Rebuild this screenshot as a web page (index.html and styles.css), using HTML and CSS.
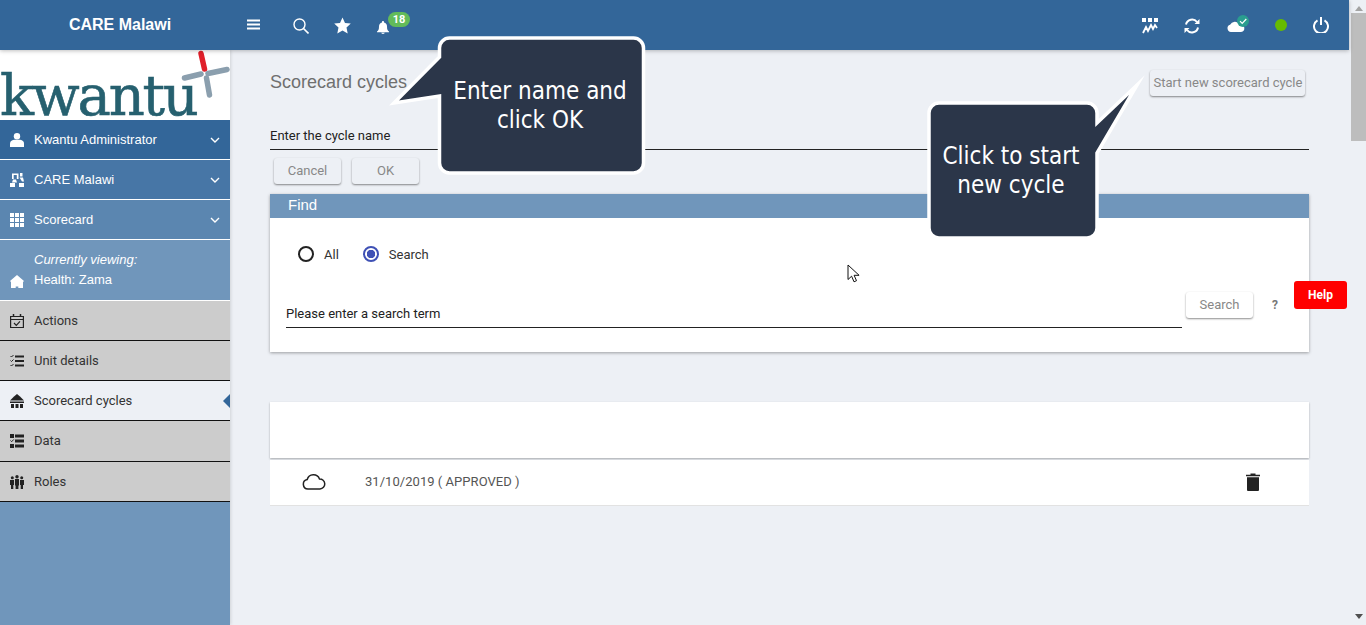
FILE: index.html
```html
<!DOCTYPE html>
<html lang="en">
<head>
<meta charset="utf-8">
<title>Scorecard cycles</title>
<link rel="stylesheet" href="styles.css">
</head>
<body>
<div class="app">
  <div class="page">
    <header class="topbar">
      <div class="brand">CARE Malawi</div>
      <nav class="tools">
        <svg class="ic-menu" viewBox="0 0 13 11"><path d="M0 0.5h13v2H0zM0 4.500h13v2H0zM0 8.500h13v2H0z" fill="#fff"/></svg>
        <svg class="ic-search" viewBox="0 0 16 16"><circle cx="6.500" cy="6.500" r="5.500" fill="none" stroke="#fff" stroke-width="1.400"/><path d="M10.500 10.500L15.500 15.500" stroke="#fff" stroke-width="1.600"/></svg>
        <svg class="ic-star" viewBox="0 0 17 17"><path d="M8.500 0.500l2.500 5.400 5.800.7-4.300 4 1.200 5.900-5.200-3-5.200 3 1.200-5.900-4.300-4 5.800-.7z" fill="#fff"/></svg>
        <span class="bell">
          <svg class="ic-bell" viewBox="0 0 12 13"><path d="M6 0c.6 0 1 .4 1 1v.4c2 .5 3 2 3 4 0 3 .6 3.800 2 5.100v.8H0v-.8c1.400-1.300 2-2.100 2-5.100 0-2 1-3.500 3-4V1c0-.6.4-1 1-1zM4.300 11.800h3.400c0 .7-.8 1.200-1.700 1.200s-1.700-.5-1.700-1.200z" fill="#fff"/></svg>
          <span class="badge">18</span>
        </span>
      </nav>
      <div class="status">
        <svg class="ic-stats" viewBox="0 0 16 16"><path d="M0 0h4v4H0zM6 0h4v4H6zM12 0h4v4h-4z" fill="#fff"/><path d="M1 15l3-6 2 4 3-6 2 4 2-4 2 3" fill="none" stroke="#fff" stroke-width="1.800"/></svg>
        <svg class="ic-sync" viewBox="0 0 16 16"><path d="M2 6.500A6.200 6.200 0 0 1 13 4M14 9.500A6.200 6.200 0 0 1 3 12" fill="none" stroke="#fff" stroke-width="2"/><path d="M15.500 1v5h-5zM.5 15v-5h5z" fill="#fff"/></svg>
        <span class="cloud">
          <svg class="ic-cloud" viewBox="0 0 20 12"><path d="M4.500 12a4 4 0 0 1-1-7.800A6 6 0 0 1 14 3.500a4.300 4.300 0 0 1 1.500 8.500z" fill="#fff"/></svg>
          <svg class="ic-tick" viewBox="0 0 12 12"><circle cx="6" cy="6" r="6" fill="#2a9d8f"/><path d="M3 6.200l2.200 2.200L9.300 4" fill="none" stroke="#fff" stroke-width="1.200"/></svg>
        </span>
        <span class="dot"></span>
        <svg class="ic-power" viewBox="0 0 16 16"><path d="M4.500 3.300a7 7 0 1 0 7 0" fill="none" stroke="#fff" stroke-width="2"/><path d="M8 0v8" stroke="#fff" stroke-width="2"/></svg>
      </div>
    </header>
    <div class="below">
      <aside class="sidebar">
        <div class="logo">
          <span class="logo-text">kwantu</span>
          <svg class="logo-cross" viewBox="0 0 50 50"><path d="M21 3.500l3.500 15.500" stroke="#e0202a" stroke-width="5.500" stroke-linecap="round"/><path d="M4.500 28L21 24M28 23.500L47 19.500M26.500 28L29.500 45" stroke="#8b9fae" stroke-width="5.500" stroke-linecap="round"/></svg>
        </div>
        <a class="nav-blue shade-1">
          <svg class="nav-icon" viewBox="0 0 14 14"><circle cx="7" cy="3.200" r="3.200" fill="#fff"/><path d="M0 14v-3.500C0 8 2.500 6.800 4.500 6.800h5c2 0 4.500 1.200 4.500 3.700V14z" fill="#fff"/></svg>
          <span class="nav-label">Kwantu Administrator</span>
          <svg class="chev" viewBox="0 0 10 6"><path d="M1 1l4 4 4-4" fill="none" stroke="#fff" stroke-width="1.400"/></svg>
        </a>
        <a class="nav-blue shade-2">
          <svg class="nav-icon tall-icon" viewBox="0 0 14 15"><path d="M2 7V1.500h6.500V7H6.800V3H3.700v4zM10 1h2.500v3.500H10zM9.500 5.500h3.500l1 4h-2zM3 7.500h3l1 3H2z" fill="#fff"/><path d="M0 11h5v4H0zM9 11h5v4H9z" fill="#fff"/></svg>
          <span class="nav-label">CARE Malawi</span>
          <svg class="chev" viewBox="0 0 10 6"><path d="M1 1l4 4 4-4" fill="none" stroke="#fff" stroke-width="1.400"/></svg>
        </a>
        <a class="nav-blue shade-3">
          <svg class="nav-icon" viewBox="0 0 14 14"><path d="M0 0h4v4H0zM5 0h4v4H5zM10 0h4v4h-4zM0 5h4v4H0zM5 5h4v4H5zM10 5h4v4h-4zM0 10h4v4H0zM5 10h4v4H5zM10 10h4v4h-4z" fill="#fff"/></svg>
          <span class="nav-label">Scorecard</span>
          <svg class="chev" viewBox="0 0 10 6"><path d="M1 1l4 4 4-4" fill="none" stroke="#fff" stroke-width="1.400"/></svg>
        </a>
        <div class="current">
          <svg class="nav-icon" viewBox="0 0 14 14"><path d="M7 1l7 6-1 1v6H8.300v-1.500H5.700V14H1V8L0 7z" fill="#fff"/></svg>
          <div class="current-text">
            <em>Currently viewing:</em>
            <span>Health: Zama</span>
          </div>
        </div>
        <a class="nav-grey">
          <svg class="nav-icon" viewBox="0 0 14 14"><path d="M.6 2.500h12.800v11H.6zM.6 5.500h12.800" fill="none" stroke="#222" stroke-width="1.200"/><path d="M3.500 0v3M10.500 0v3" stroke="#222" stroke-width="1.500"/><path d="M4 9l2.300 2.300L10 7.300" fill="none" stroke="#222" stroke-width="1.200"/></svg>
          <span class="nav-label">Actions</span>
        </a>
        <a class="nav-grey">
          <svg class="nav-icon" viewBox="0 0 14 14"><path d="M5 2.500h9M5 7h9M5 11.500h9" stroke="#222" stroke-width="2"/><path d="M.5 2l1 1 2-2M.5 6.500l1 1 2-2M.5 11l1 1 2-2" fill="none" stroke="#222" stroke-width="1"/></svg>
          <span class="nav-label">Unit details</span>
        </a>
        <a class="nav-grey active">
          <svg class="nav-icon" viewBox="0 0 14 14"><path d="M7 0l3 2.500L14 6.500H0L4 2.500z" fill="#222"/><path d="M0 7.500h14v1.500H0z" fill="#222"/><path d="M1 10h3v4H1zM5.500 10h3v4h-3zM10 10h3v4h-3z" fill="#222"/></svg>
          <span class="nav-label">Scorecard cycles</span>
          <span class="pointer"></span>
        </a>
        <a class="nav-grey tall">
          <svg class="nav-icon" viewBox="0 0 14 14"><path d="M0 0h4v4H0zM5 .5h9v3H5zM5 5.500h9v3H5zM0 10h4v4H0zM5 10.500h9v3H5z" fill="#222"/><path d="M.5 6.500l1.200 1.200 2-2.200" fill="none" stroke="#222"/></svg>
          <span class="nav-label">Data</span>
        </a>
        <a class="nav-grey">
          <svg class="nav-icon" viewBox="0 0 14 14"><circle cx="2.300" cy="2.700" r="1.500" fill="#222"/><circle cx="7" cy="1.700" r="1.700" fill="#222"/><circle cx="11.700" cy="2.700" r="1.500" fill="#222"/><path d="M0 5h4v5H3.300v4H1v-4H0zM10 5h4v5h-1v4h-2.300v-4H10zM5 4h4v6.500h-.6V14H5.600v-3.500H5z" fill="#222"/></svg>
          <span class="nav-label">Roles</span>
        </a>
      </aside>
      <main class="main">
        <div class="title-row">
          <h1 class="title">Scorecard cycles</h1>
          <button class="btn btn-start">Start new scorecard cycle</button>
        </div>
        <div class="field name-field">Enter the cycle name</div>
        <div class="actions">
          <button class="btn btn-act">Cancel</button>
          <button class="btn btn-act">OK</button>
        </div>
        <section class="find">
          <h2 class="find-head">Find</h2>
          <div class="find-body">
            <div class="radios">
              <span class="radio"></span><span class="radio-label">All</span>
              <span class="radio on"></span><span class="radio-label">Search</span>
            </div>
            <div class="search-row">
              <div class="field search-field">Please enter a search term</div>
              <button class="btn btn-search">Search</button>
              <span class="hint">?</span>
            </div>
          </div>
        </section>
        <section class="list">
          <div class="list-head"></div>
          <div class="list-row">
            <svg class="row-cloud" viewBox="0 0 24 16"><path d="M6 15a4.800 4.800 0 0 1-.8-9.500A6.500 6.500 0 0 1 17.500 5a5 5 0 0 1 .5 10z" fill="none" stroke="#222" stroke-width="1.500"/></svg>
            <span class="row-text">31/10/2019 ( APPROVED )</span>
            <svg class="row-trash" viewBox="0 0 14 18"><path d="M0 1.700h4.500V.4h5v1.300H14v1.600H0zM1 4.300h12V17a1 1 0 0 1-1 1H2a1 1 0 0 1-1-1z" fill="#222"/></svg>
          </div>
        </section>
      </main>
    </div>
  </div>
  <div class="scrollbar">
    <span class="arrow-up"></span>
    <span class="thumb"></span>
    <span class="arrow-down"></span>
  </div>
</div>

<div class="callout callout-name">
  <svg class="callout-shape" viewBox="0 0 265 150"><path d="M64.500 8h184a10 10 0 0 1 10 10v115a10 10 0 0 1-10 10h-184a10 10 0 0 1-10-10V66L9 73 54.500 27V18a10 10 0 0 1 10-10z" fill="#2b3649" stroke="#fff" stroke-width="3.500" stroke-miterlimit="12"/></svg>
  <p class="callout-text">Enter name and<br>click OK</p>
</div>
<div class="callout callout-start">
  <svg class="callout-shape" viewBox="0 0 225 165"><path d="M12 33h148a10 10 0 0 1 10 10v10L210 15 170 83v75a10 10 0 0 1-10 10H12a10 10 0 0 1-10-10V43a10 10 0 0 1 10-10z" fill="#2b3649" stroke="#fff" stroke-width="3.500" stroke-miterlimit="12"/></svg>
  <p class="callout-text">Click to start<br>new cycle</p>
</div>
<button class="help">Help</button>
<svg class="cursor" viewBox="0 0 13 20"><path d="M1 1v14.500l3.600-3.300 2.400 5.600 2.500-1.100-2.400-5.400h5z" fill="#fff" stroke="#111" stroke-width="1"/></svg>
</body>
</html>
```

FILE: styles.css
```css
* { box-sizing: border-box; }
html, body { margin: 0; height: 100%; overflow: hidden; }
body { background: #edf0f5; font-family: Roboto, "Liberation Sans", sans-serif; font-size: 13px; color: #222; }
svg { display: block; flex: none; }

.app { display: flex; height: 625px; }
.page { width: 1349px; display: flex; flex-direction: column; }

.topbar { height: 50px; flex: none; background: #336699; display: flex; align-items: center; color: #fff; box-shadow: 0 1px 4px rgba(0,0,0,.25); position: relative; z-index: 2; }
.brand { width: 230px; padding-left: 10px; text-align: center; font: bold 16px "Liberation Sans", sans-serif; }
.tools { display: flex; align-items: center; padding-left: 17px; }
.ic-menu { width: 13px; height: 11px; margin-top: -1px; }
.ic-search { width: 16px; height: 16px; margin-left: 33px; margin-top: 2px; }
.ic-star { width: 17px; height: 17px; margin-left: 25px; margin-top: 1px; }
.bell { position: relative; margin-left: 26px; margin-top: 5px; }
.ic-bell { width: 12px; height: 13px; }
.badge { position: absolute; left: 11px; top: -9px; width: 22px; height: 15px; border-radius: 8px; background: #62bb5a; font: bold 11px/15px Roboto, sans-serif; text-align: center; color: #fff; }
.status { margin-left: auto; padding-right: 20px; display: flex; align-items: center; }
.ic-stats { width: 16px; height: 16px; margin-top: 1px; }
.ic-sync { width: 16px; height: 16px; margin-left: 26px; margin-top: 2px; }
.cloud { position: relative; margin-left: 26px; margin-top: 2px; }
.ic-cloud { width: 20px; height: 11px; }
.ic-tick { position: absolute; left: 11px; top: -6px; width: 12px; height: 12px; }
.dot { width: 12px; height: 12px; border-radius: 50%; background: #66bb00; margin-left: 29px; }
.ic-power { width: 16px; height: 16px; margin-left: 26px; }

.below { flex: 1; display: flex; min-height: 0; }
.sidebar { width: 230px; flex: none; background: #7096bb; box-shadow: 1px 0 3px rgba(0,0,0,.12); }
.logo { height: 70px; background: #fff; position: relative; }
.logo-text { position: absolute; left: 0; top: 22px; font: 400 56px/48px "DejaVu Serif", serif; letter-spacing: -2.200px; color: #26606f; -webkit-text-stroke: .6px #26606f; }
.logo-cross { position: absolute; left: 180px; top: 0; width: 50px; height: 50px; }

.nav-blue, .nav-grey { display: flex; align-items: center; height: 40px; padding: 0 10px; position: relative; }
.nav-blue { color: #fff; border-bottom: 1px solid #fff; font-family: "Liberation Sans", sans-serif; }
.nav-grey { color: #333; background: #ccc; border-bottom: 1px solid #111; }
.nav-grey.tall { height: 41px; padding-bottom: 1px; }
.nav-grey.active { background: #edf0f5; }
.shade-1 { background: #336699; }
.shade-2 { background: #4776a6; }
.shade-3 { background: #5b86b0; }
.nav-icon { width: 14px; height: 14px; margin-right: 10px; }
.tall-icon { height: 15px; }
.nav-label { flex: 1; }
.chev { width: 10px; height: 6px; }
.pointer { position: absolute; right: 0; top: 13px; width: 7px; height: 14px; background: #336699; clip-path: polygon(100% 0, 100% 100%, 0 50%); }

.current { height: 61px; background: #7096bb; border-bottom: 1px solid #fff; color: #fff; display: flex; align-items: flex-end; padding: 0 10px 12px; font-family: "Liberation Sans", sans-serif; }
.current-text { display: flex; flex-direction: column; gap: 5px; line-height: 15px; margin-bottom: 1px; }
.current-text em { font-style: italic; }

.main { flex: 1; padding: 20px 40px 0; min-width: 0; }
.title-row { display: flex; align-items: center; justify-content: space-between; padding-right: 4px; }
.title { margin: -2px 0 0; font: 400 18px "Liberation Sans", sans-serif; color: #6f6f6f; }
.btn { border: 0; border-radius: 3px; background: #edf0f5; box-shadow: 0 1px 2px rgba(0,0,0,.45); color: #888; font: 400 13px Roboto, sans-serif; padding: 0 0 2px; height: 26px; }
.btn-start { width: 155px; padding-left: 1px; }
.field { border-bottom: 1px solid #222; color: #222; font-size: 13px; }
.name-field { margin-top: 32px; height: 22px; line-height: 15px; }
.actions { display: flex; gap: 11px; margin-top: 8px; padding-left: 4px; }
.btn-act { width: 67px; }

.find { margin-top: 10px; background: #fff; box-shadow: 0 1px 3px rgba(0,0,0,.35); }
.find-head { margin: 0; height: 24px; background: #7096bb; color: #fff; padding-left: 18px; font: 400 15px/22px "Liberation Sans", sans-serif; }
.find-body { height: 134px; padding: 28px 12px 0 16px; }
.radios { display: flex; align-items: center; height: 16px; padding-left: 12px; }
.radio { width: 16px; height: 16px; border-radius: 50%; border: 2px solid #222; flex: none; }
.radio.on { border-color: #3f51b5; background: radial-gradient(circle, #3f51b5 0 4px, transparent 4.500px); }
.radio-label { margin-left: 10px; margin-right: 24px; color: #333; }
.search-row { display: flex; align-items: flex-start; margin-top: 30px; }
.search-field { width: 896px; height: 36px; padding-top: 14px; line-height: 15px; flex: none; }
.btn-search { width: 67px; margin-left: 4px; background: #fff; flex: none; }
.hint { width: 44px; flex: none; text-align: center; font: bold 12px/26px Roboto, sans-serif; color: #777; }

.list { margin-top: 50px; }
.list-head { height: 56px; background: #fff; box-shadow: 0 1px 2px rgba(0,0,0,.3); }
.list-row { margin-top: 2px; height: 46px; background: #fff; border-bottom: 1px solid #e2e2e2; display: flex; align-items: center; padding: 0 0 2px 32px; }
.row-cloud { width: 24px; height: 16px; }
.row-text { margin-left: 39px; color: #555; letter-spacing: .04px; flex: 1; }
.row-trash { width: 14px; height: 18px; margin-right: 49px; }

.scrollbar { flex: 1; padding-left: 2px; display: flex; flex-direction: column; align-items: center; }
.arrow-up { margin-top: 6px; border: 4px solid transparent; border-top: 0; border-bottom: 5px solid #a3a3a3; }
.thumb { width: 15px; height: 128px; margin-top: 2px; background: #bdbdbd; }
.arrow-down { margin-top: auto; margin-bottom: 6px; border: 4px solid transparent; border-bottom: 0; border-top: 5px solid #505050; }

.callout { position: absolute; z-index: 3; }
.callout-shape { position: absolute; left: 0; top: 0; width: 100%; height: 100%; overflow: visible; }
.callout-name { left: 385px; top: 30px; width: 265px; height: 150px; }
.callout-start { left: 927px; top: 70px; width: 225px; height: 165px; }
.callout-text { position: absolute; margin: 0; text-align: center; color: #fff; font: 400 24px/29px "DejaVu Sans Condensed", "DejaVu Sans", sans-serif; font-stretch: condensed; }
.callout-name .callout-text { left: 55px; width: 200px; top: 47px; }
.callout-start .callout-text { left: 4px; width: 160px; top: 72px; }

.help { position: absolute; z-index: 3; left: 1294px; top: 281px; width: 53px; height: 28px; border: 0; border-radius: 3px; background: #f00; color: #fff; font: 700 12px Roboto, sans-serif; padding: 0; }
.cursor { position: absolute; z-index: 4; left: 847px; top: 264px; width: 13px; height: 20px; }
```
